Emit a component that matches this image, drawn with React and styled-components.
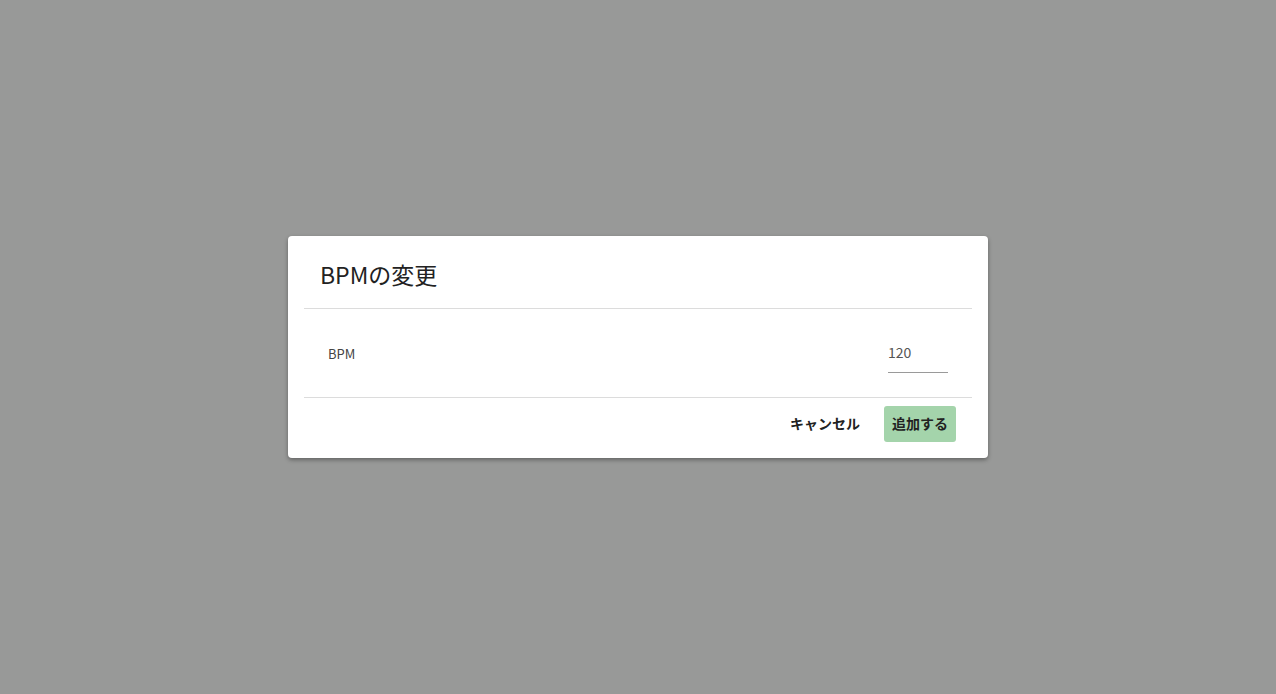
import styled, { createGlobalStyle } from "styled-components";

const GlobalStyle = createGlobalStyle`
  html, body {
    margin: 0;
    padding: 0;
    height: 100%;
  }
  body {
    font-family: "Noto Sans CJK JP", "Noto Sans", sans-serif;
    color: #222;
  }
  #root {
    height: 100%;
  }
`;

const Overlay = styled.div`
  width: 100%;
  height: 100vh;
  background: #989998;
  display: flex;
  justify-content: center;
  align-items: flex-start;
  padding-top: 236px;
  box-sizing: border-box;
`;

const Dialog = styled.div`
  width: 700px;
  background: #fff;
  border-radius: 4px;
  box-shadow: 0 2px 4px rgba(0, 0, 0, 0.35);
  display: flex;
  flex-direction: column;
`;

const Header = styled.div`
  height: 73px;
  margin: 0 16px;
  padding: 0 16px;
  display: flex;
  align-items: center;
  border-bottom: 1px solid #dcdcdc;
  box-sizing: border-box;
`;

const Title = styled.h2`
  margin: 4px 0 0;
  font-size: 23px;
  font-weight: 400;
  color: #222;
`;

const Body = styled.div`
  height: 89px;
  margin: 0 16px;
  padding: 0 24px;
  display: flex;
  align-items: center;
  justify-content: space-between;
  border-bottom: 1px solid #dcdcdc;
  box-sizing: border-box;
`;

const Label = styled.label`
  font-size: 13px;
  font-weight: 400;
  color: #444;
`;

const NumberInput = styled.input`
  width: 60px;
  border: none;
  border-bottom: 1px solid #9a9a9a;
  outline: none;
  font-family: inherit;
  font-size: 14px;
  font-weight: 400;
  color: #555;
  padding: 6px 0 10px;
  margin-top: 2px;
  background: transparent;
`;

const Footer = styled.div`
  padding: 8px 32px 16px;
  display: flex;
  justify-content: flex-end;
  gap: 12px;
`;

const Button = styled.button`
  height: 36px;
  padding: 0 8px 3px;
  border: none;
  border-radius: 3px;
  font-family: inherit;
  font-size: 14px;
  font-weight: 700;
  color: #222;
  background: ${(p) => (p.$primary ? "#a4d4ab" : "transparent")};
  cursor: pointer;
`;

const CancelButton = styled(Button)`
  padding: 0 12px 3px;
`;

export default function App() {
  return (
    <>
      <GlobalStyle />
      <Overlay>
        <Dialog>
          <Header>
            <Title>BPMの変更</Title>
          </Header>
          <Body>
            <Label>BPM</Label>
            <NumberInput type="text" defaultValue="120" />
          </Body>
          <Footer>
            <CancelButton>キャンセル</CancelButton>
            <Button $primary>追加する</Button>
          </Footer>
        </Dialog>
      </Overlay>
    </>
  );
}
